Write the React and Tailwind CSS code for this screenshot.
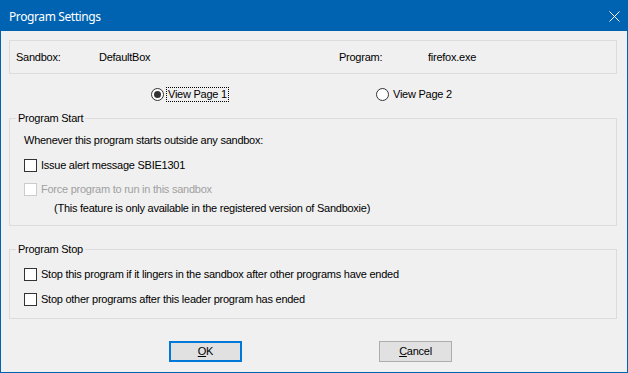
import React from "react";

function Check({ disabled, label }) {
  return (
    <div className="flex items-center h-[15px]">
      <div
        className={
          "w-[13px] h-[13px] border bg-white " +
          (disabled ? "border-[#cccccc]" : "border-[#333333]")
        }
      />
      <span className={"ml-[4px] " + (disabled ? "text-[#a0a0a0]" : "text-black")}>{label}</span>
    </div>
  );
}

function Radio({ checked, label, focus }) {
  return (
    <div className="flex items-center h-[15px]">
      <div className="w-[13px] h-[13px] rounded-full border border-[#333333] bg-white flex items-center justify-center">
        {checked && <div className="w-[7px] h-[7px] rounded-full bg-[#333333]" />}
      </div>
      <span
        className={
          "ml-[2px] px-[1px] leading-[13px] " +
          (focus ? "border border-dotted border-black" : "border border-transparent")
        }
      >
        {label}
      </span>
    </div>
  );
}

export default function App() {
  return (
    <div
      className="w-[628px] h-[373px] border border-[#0063b1] flex flex-col text-[11px] leading-[15px] tracking-[-0.25px] text-black"
      style={{ fontFamily: '"Liberation Sans", Arial, sans-serif' }}
    >
      <div className="h-[30px] bg-[#0063b1] flex items-center justify-between pl-[8px] pr-[6px] shrink-0">
        <span
          className="text-white text-[12px] tracking-[-0.4px]"
          style={{ fontFamily: '"Noto Sans", "Open Sans", sans-serif' }}
        >
          Program Settings
        </span>
        <svg width="11" height="11" viewBox="0 0 11 11" className="mr-[1px]">
          <path d="M0.5 0.5 L10.5 10.5 M10.5 0.5 L0.5 10.5" stroke="white" strokeWidth="1" fill="none" />
        </svg>
      </div>
      <div className="flex-1 bg-[#f0f0f0] flex flex-col pl-[8px] pr-[10px]">
        <div className="mt-[9px] h-[34px] border border-[#dcdcdc] flex items-center pl-[6px]">
          <span className="w-[83px]">Sandbox:</span>
          <span className="w-[240px]">DefaultBox</span>
          <span className="w-[89px]">Program:</span>
          <span>firefox.exe</span>
        </div>
        <div className="mt-[13px] flex pl-[142px]">
          <div className="w-[225px]">
            <Radio checked focus label="View Page 1" />
          </div>
          <Radio label="View Page 2" />
        </div>
        <fieldset className="mt-[9px] border border-[#dcdcdc] pt-[7px] pb-[9px]">
          <legend className="ml-[6px] px-[2px] leading-[15px]">Program Start</legend>
          <div className="pl-[14px]">
            <div>Whenever this program starts outside any sandbox:</div>
            <div className="mt-[10px]">
              <Check label="Issue alert message SBIE1301" />
            </div>
            <div className="mt-[9px]">
              <Check disabled label="Force program to run in this sandbox" />
            </div>
            <div className="mt-[4px] ml-[30px]">
              (This feature is only available in the registered version of Sandboxie)
            </div>
          </div>
        </fieldset>
        <fieldset className="mt-[16px] border border-[#dcdcdc] pt-[10px] pb-[11px]">
          <legend className="ml-[6px] px-[2px] leading-[15px]">Program Stop</legend>
          <div className="pl-[14px]">
            <Check label="Stop this program if it lingers in the sandbox after other programs have ended" />
            <div className="mt-[10px]">
              <Check label="Stop other programs after this leader program has ended" />
            </div>
          </div>
        </fieldset>
        <div className="mt-[22px] flex pl-[160px] gap-[137px]">
          <button className="w-[73px] h-[21px] border-2 border-[#0078d7] bg-[#e1e1e1] flex items-center justify-center">
            <span>
              <span className="underline">O</span>K
            </span>
          </button>
          <button className="w-[73px] h-[21px] border border-[#adadad] bg-[#e1e1e1] flex items-center justify-center">
            <span>
              <span className="underline">C</span>ancel
            </span>
          </button>
        </div>
      </div>
    </div>
  );
}
